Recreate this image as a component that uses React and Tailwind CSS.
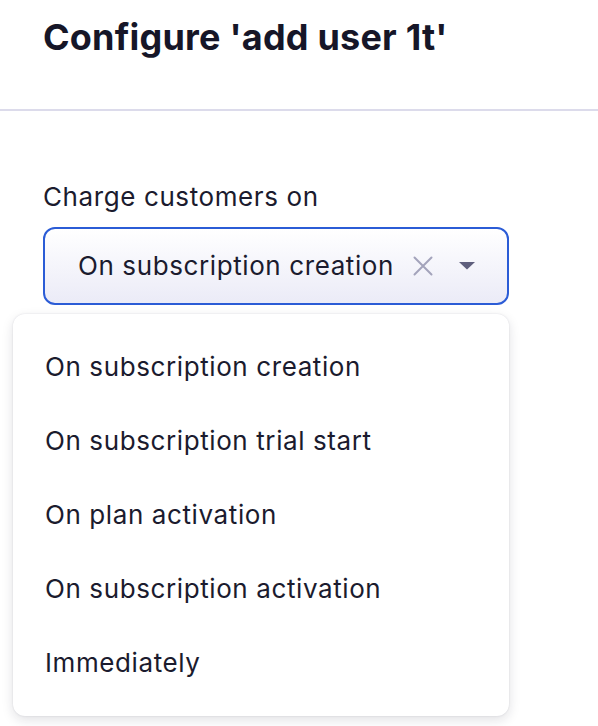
import React from "react";

const options = [
  "On subscription creation",
  "On subscription trial start",
  "On plan activation",
  "On subscription activation",
  "Immediately",
];

export default function App() {
  return (
    <div
      className="w-[598px] h-[726px] bg-white overflow-hidden text-[#1b1b2e]"
      style={{ fontFamily: "Inter, 'Noto Sans', sans-serif" }}
    >
      <div className="pl-[43px] pt-[15px] h-[109px]">
        <h1 className="text-[36px] leading-[44px] font-bold tracking-[0.2px] text-[#161628]">
          Configure 'add user 1t'
        </h1>
      </div>
      <div className="h-[2px] bg-[#dcdbeb]" />
      <div className="pl-[43px] pt-[70px]">
        <div className="text-[26px] leading-[32px] tracking-[0.6px]">Charge customers on</div>
        <div className="relative mt-[14px] w-[466px]">
          <div className="h-[78px] rounded-[12px] border-2 border-[#2b5cd6] bg-gradient-to-b from-white to-[#ebebf7] flex items-center pl-[33px] pr-[32px]">
            <span className="text-[26px] leading-[32px] tracking-[0.6px] flex-1">On subscription creation</span>
            <svg width="20" height="20" viewBox="0 0 20 20" className="mr-[26px]">
              <path d="M1.5 1.5 L18.5 18.5 M18.5 1.5 L1.5 18.5" stroke="#a3a3bb" strokeWidth="2" strokeLinecap="round" />
            </svg>
            <svg width="16" height="8" viewBox="0 0 16 8">
              <path d="M0 0 H16 L8 7.5 Z" fill="#5f5f7d" />
            </svg>
          </div>
          <div className="absolute left-[-30px] top-[87px] w-[496px] bg-white rounded-[12px] py-[16px] shadow-[0_4px_12px_rgba(20,20,50,0.13),0_0_2px_rgba(20,20,50,0.12)]">
            {options.map((o) => (
              <div key={o} className="h-[74px] flex items-center pl-[32px] text-[26px] leading-[32px] tracking-[0.6px]">
                {o}
              </div>
            ))}
          </div>
        </div>
      </div>
    </div>
  );
}
